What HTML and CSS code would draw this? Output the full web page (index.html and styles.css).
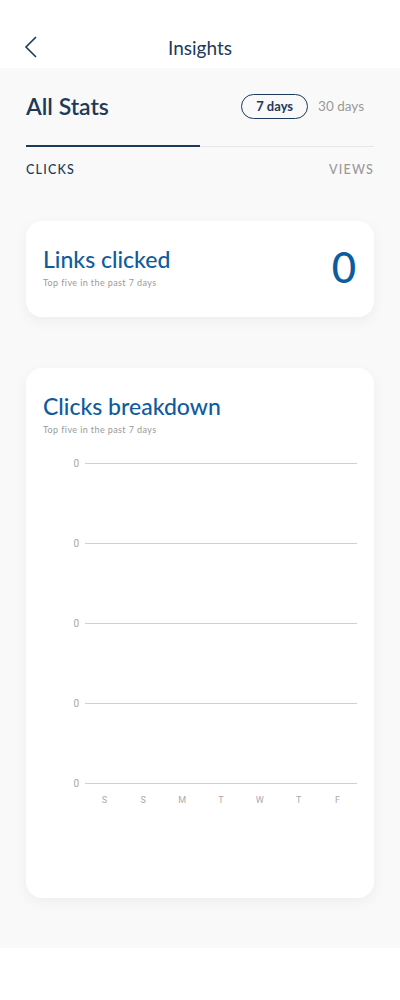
FILE: index.html
```html
<!DOCTYPE html>
<html>
<head>
    <title>Insights</title>
    <link rel="stylesheet" href="styles.css">
</head>
<body>
    <div class="top-bar">
        <svg class="back" width="14" height="22" viewBox="0 0 14 22">
            <path d="M12 1 L2 11 L12 21" fill="none" stroke="#1d3a5a" stroke-width="1.6"/>
        </svg>
        <h2 class="page-title">Insights</h2>
    </div>

    <div id="stats-page">
        <div class="stats-head">
            <h1>All Stats</h1>
            <div class="range">
                <span class="range-pill active">7 days</span>
                <span class="range-pill">30 days</span>
            </div>
        </div>

        <div class="tabs">
            <div class="tab active">CLICKS</div>
            <div class="tab">VIEWS</div>
        </div>

        <div class="card links-card">
            <div>
                <div class="card-title">Links clicked</div>
                <div class="card-sub">Top five in the past 7 days</div>
            </div>
            <div class="big-number">0</div>
        </div>

        <div class="card chart-card">
            <div class="card-title">Clicks breakdown</div>
            <div class="card-sub">Top five in the past 7 days</div>

            <div class="chart">
                <div class="grid-row"><span class="axis-label">0</span><span class="grid-line"></span></div>
                <div class="grid-row"><span class="axis-label">0</span><span class="grid-line"></span></div>
                <div class="grid-row"><span class="axis-label">0</span><span class="grid-line"></span></div>
                <div class="grid-row"><span class="axis-label">0</span><span class="grid-line"></span></div>
                <div class="grid-row"><span class="axis-label">0</span><span class="grid-line"></span></div>
                <div class="days">
                    <span>S</span><span>S</span><span>M</span><span>T</span><span>W</span><span>T</span><span>F</span>
                </div>
            </div>
        </div>
    </div>
</body>
</html>
```

FILE: styles.css
```css
body {
    margin: 0;
    font-family: Lato, "Noto Sans", sans-serif;
    background-color: #ffffff;
    color: #1d3a5a;
}

.top-bar {
    position: relative;
    height: 68px;
    display: flex;
    align-items: center;
    justify-content: center;
    background-color: #ffffff;
}

.back {
    position: absolute;
    left: 24px;
    top: 36px;
}

.page-title {
    margin: 26px 0 0 0;
    font-size: 19px;
    font-weight: 400;
    color: #1d3a5a;
}

#stats-page {
    background-color: #f9f9f9;
    padding: 25px 26px 50px 26px;
}

.stats-head {
    display: flex;
    align-items: center;
    justify-content: space-between;
    height: 26px;
}

h1 {
    margin: 0;
    font-size: 23px;
    font-weight: 600;
    color: #1d3a5a;
}

.range {
    display: flex;
    align-items: center;
    margin-right: 10px;
}

.range-pill {
    font-size: 13.5px;
    color: #9a9a9a;
    margin-left: 10px;
}

.range-pill.active {
    border: 1.5px solid #1d3a5a;
    border-radius: 13px;
    height: 23px;
    line-height: 23px;
    padding: 0 14px;
    font-size: 13px;
    font-weight: 700;
    color: #1d3a5a;
    margin-left: 0;
}

.tabs {
    display: flex;
    justify-content: space-between;
    margin-top: 27px;
    border-top: 1px solid #e6e6e6;
    position: relative;
}

.tabs::before {
    content: "";
    position: absolute;
    left: 0;
    top: -2px;
    width: 174px;
    height: 2px;
    background-color: #1d3a5a;
}

.tab {
    padding-top: 15px;
    font-size: 12.5px;
    letter-spacing: 1.2px;
    font-weight: 500;
    color: #9a9a9a;
}

.tab.active {
    color: #1d3a5a;
}

.card {
    background-color: #ffffff;
    border-radius: 16px;
    box-shadow: 0px 4px 14px rgba(0, 0, 0, 0.05);
}

.links-card {
    margin-top: 44px;
    padding: 24px 17px 28px 17px;
    display: flex;
    justify-content: space-between;
    align-items: flex-start;
}

.card-title {
    font-size: 23px;
    line-height: 28px;
    font-weight: 500;
    color: #0e5c9e;
}

.card-sub {
    margin-top: 4px;
    font-size: 9px;
    line-height: 12px;
    color: #9a9a9a;
    letter-spacing: 0.4px;
}

.big-number {
    font-size: 42px;
    line-height: 40px;
    font-weight: 500;
    color: #0e5c9e;
    margin-top: 2px;
    margin-right: 1px;
}

.chart-card {
    margin-top: 51px;
    padding: 24px 17px 92px 17px;
}

.chart {
    margin-top: 21px;
    font-family: Roboto, sans-serif;
}

.grid-row {
    display: flex;
    align-items: center;
    height: 12px;
    margin-bottom: 68px;
}

.grid-row:nth-child(5) {
    margin-bottom: 5px;
}

.axis-label {
    width: 36px;
    text-align: right;
    font-size: 10px;
    color: #a5a5a5;
}

.grid-line {
    flex: 1;
    margin-left: 6px;
    height: 1px;
    background-color: #cfcfcf;
}

.days {
    display: flex;
    margin-left: 42px;
    font-size: 9px;
    line-height: 12px;
    color: #aaaaaa;
}

.days span {
    flex: 1;
    text-align: center;
}
```
